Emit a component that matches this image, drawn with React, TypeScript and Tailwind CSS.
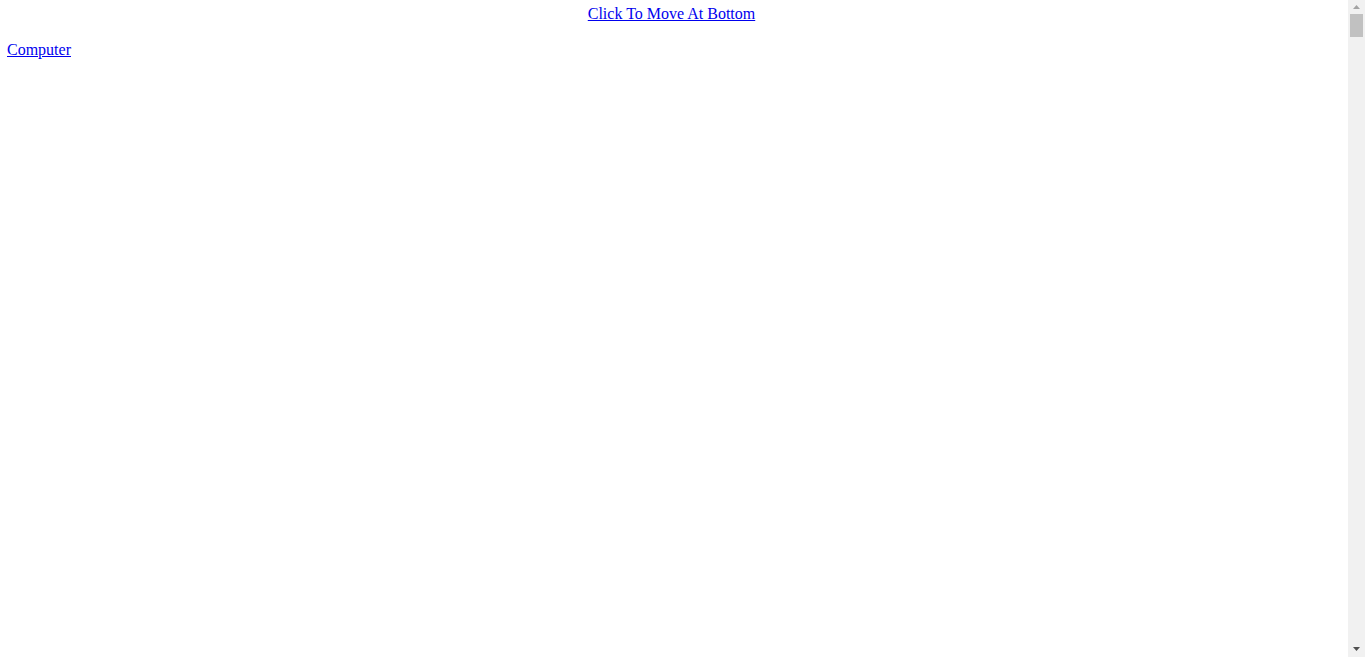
export default function App() {
  return (
    <div className="flex h-screen overflow-hidden bg-white">
      <div className="flex-1 pl-[7px] pr-[12px] pt-[5px] font-['Liberation_Serif',serif] text-base leading-[18px] text-[#0000ee]">
        <div className="text-center">
          <a href="#bottom" className="underline">
            Click To Move At Bottom
          </a>
        </div>
        <div className="mt-[18px]">
          <a href="#computer" className="underline">
            Computer
          </a>
        </div>
      </div>

      {/* fake scrollbar, headless browser draws none */}
      <div className="flex w-[17px] flex-col items-center bg-[#f1f1f1]">
        <div className="flex h-[14px] w-full items-center justify-center">
          <svg width="7" height="4" viewBox="0 0 7 4">
            <path d="M3.5 0 L7 4 L0 4 Z" fill="#a3a3a3" />
          </svg>
        </div>
        <div className="h-[23px] w-[13px] bg-[#c1c1c1]" />
        <div className="flex-1" />
        <div className="flex h-[17px] w-full items-center justify-center">
          <svg width="7" height="4" viewBox="0 0 7 4">
            <path d="M0 0 L7 0 L3.5 4 Z" fill="#505050" />
          </svg>
        </div>
      </div>
    </div>
  );
}
